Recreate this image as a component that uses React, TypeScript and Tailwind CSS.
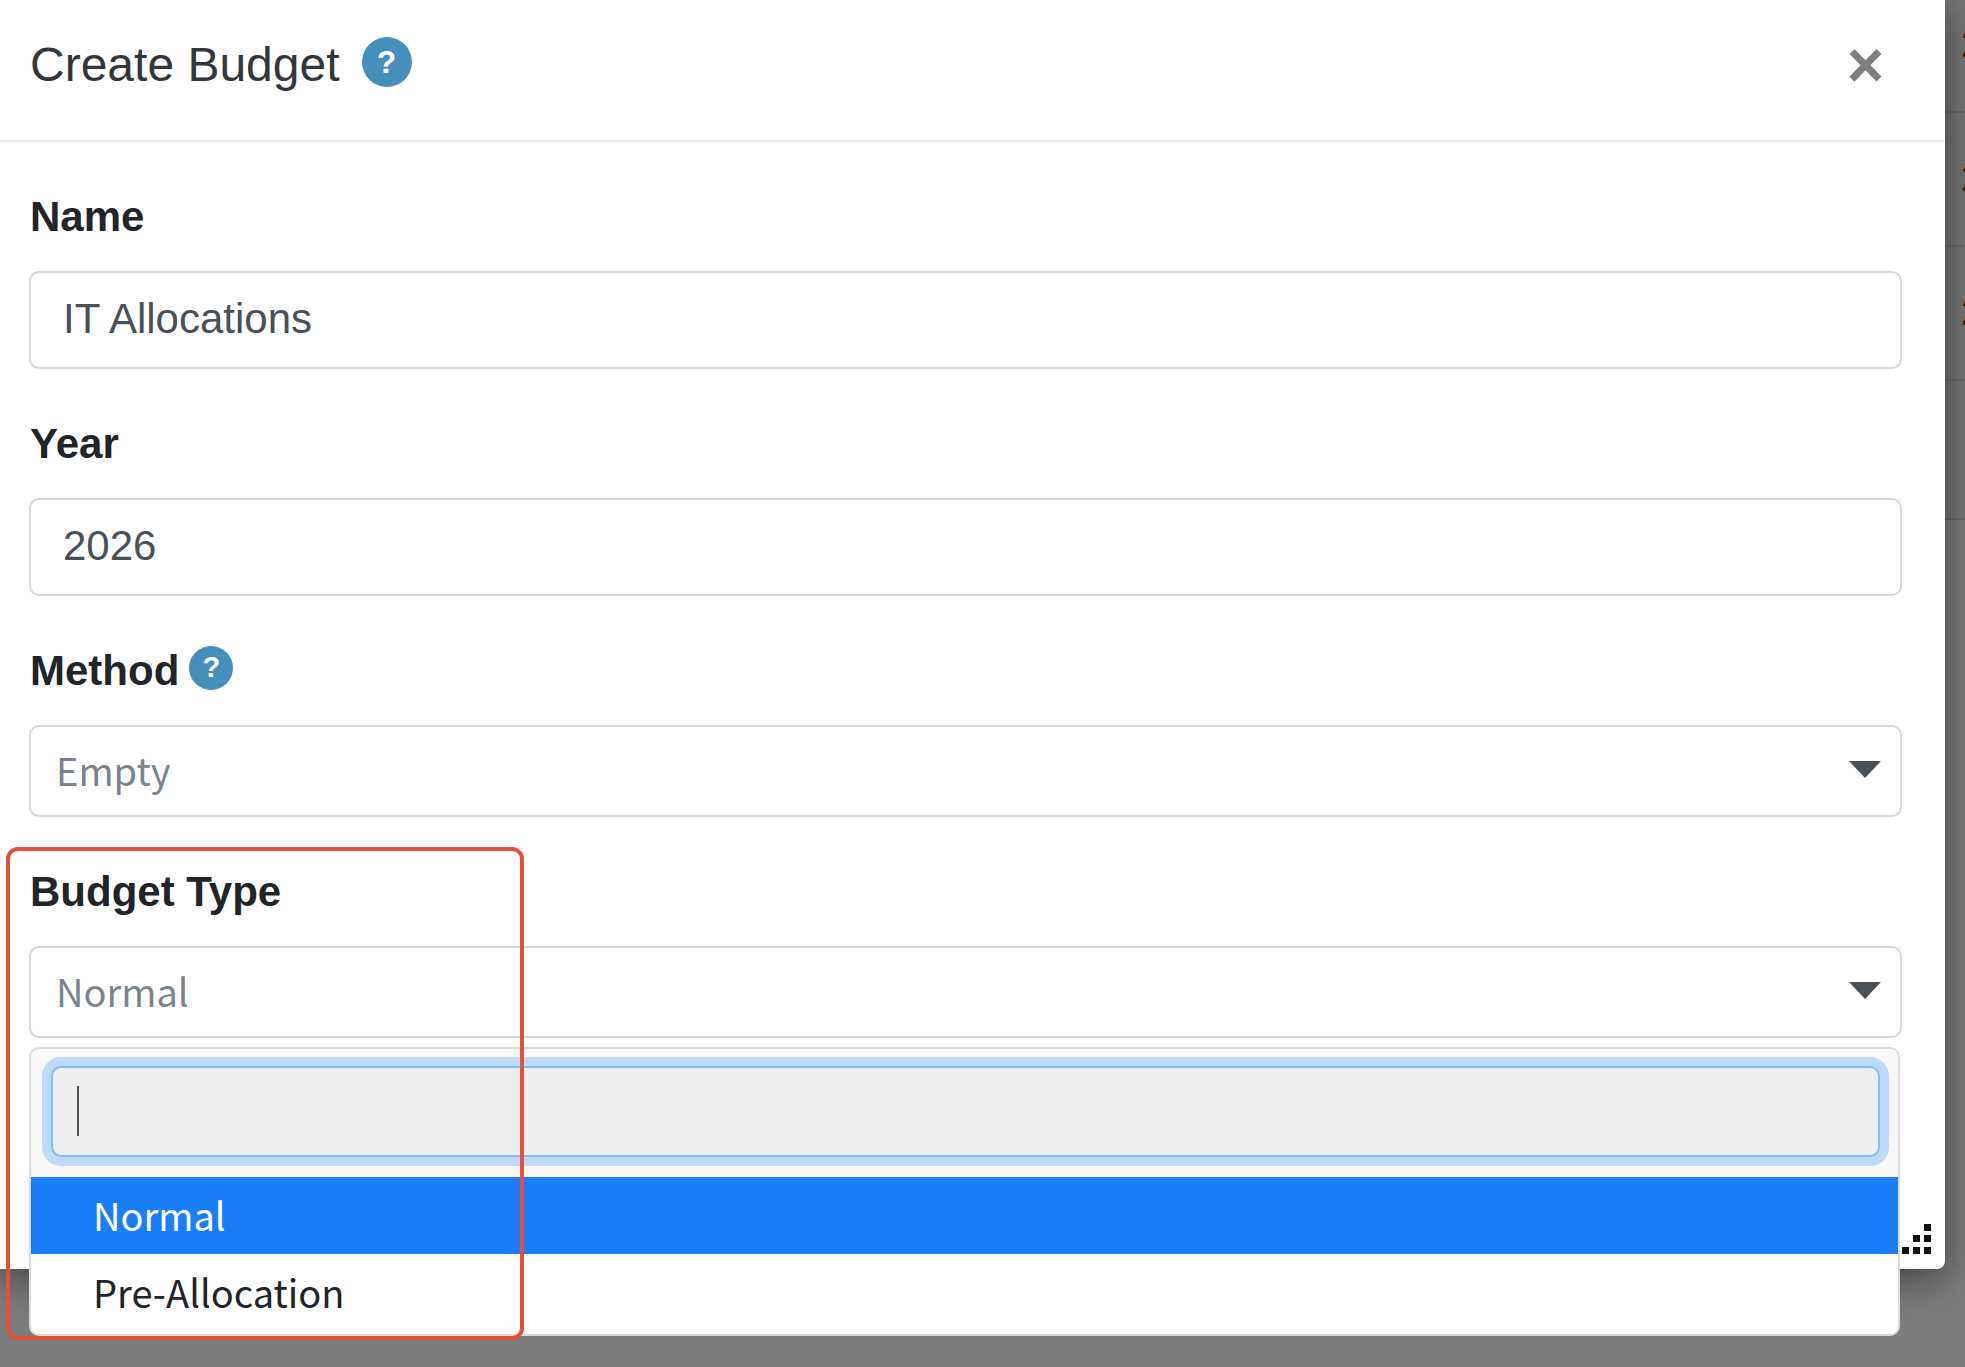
import { useState } from 'react'
import type { ReactNode } from 'react'

const budgetTypes = ['Normal', 'Pre-Allocation']

function HelpButton({ label, className }: { label: string; className: string }) {
  return (
    <button
      type="button"
      aria-label={label}
      className={`flex shrink-0 items-center justify-center rounded-full bg-[#458fbd] font-bold text-white ${className}`}
    >
      ?
    </button>
  )
}

function FieldLabel({ htmlFor, children }: { htmlFor: string; children: ReactNode }) {
  return (
    <label htmlFor={htmlFor} className="pl-px text-[42px] leading-[64px] font-bold text-[#212529]">
      {children}
    </label>
  )
}

function TextField({ id, label, initial }: { id: string; label: string; initial: string }) {
  const [value, setValue] = useState(initial)

  return (
    <div className="flex flex-col gap-[22px]">
      <FieldLabel htmlFor={id}>{label}</FieldLabel>
      <input
        id={id}
        value={value}
        onChange={(e) => setValue(e.target.value)}
        className="h-[98px] w-full rounded-[10px] border-2 border-[#d5dae0] bg-white px-8 pb-[2px] text-[42px] text-[#495057] outline-none"
      />
    </div>
  )
}

function SelectField({ id, options }: { id: string; options: string[] }) {
  return (
    <div className="relative">
      <select
        id={id}
        className="block h-[92px] w-full appearance-none rounded-[10px] border-2 border-[#d5dae0] bg-white px-[25px] pb-1 font-['Noto_Sans_CJK_SC',sans-serif] text-[38px] text-[#7b848c] outline-none"
      >
        {options.map((option) => (
          <option key={option}>{option}</option>
        ))}
      </select>
      <svg viewBox="0 0 32 17" className="pointer-events-none absolute top-9 right-[21px] h-[17px] w-8" aria-hidden="true">
        <path d="M0 0h32L16 17z" fill="#495057" />
      </svg>
    </div>
  )
}

function Backdrop() {
  return (
    <div className="absolute inset-0 flex flex-col overflow-hidden bg-[#7c7d7f]" aria-hidden="true">
      {[0, 1, 2, 3].map((row) => (
        <div
          key={row}
          className="flex h-[134px] justify-end border-b-2 border-[#6a6c6d] bg-[#777776] first:h-[113px] last:h-[139px]"
        >
          {row < 3 && <span className="mt-auto mb-11 -mr-4 text-[36px] leading-[44px] text-[#4a2008]">2</span>}
        </div>
      ))}
    </div>
  )
}

export default function App() {
  const [search, setSearch] = useState('')

  return (
    <div className="relative min-h-screen overflow-hidden font-['Liberation_Sans',Arial,sans-serif]">
      <Backdrop />

      <div role="dialog" aria-labelledby="title" className="relative mr-5 rounded-br-lg bg-white shadow-[0_10px_40px_rgba(0,0,0,0.5)]">
        <header className="flex h-[142px] items-start justify-between border-b-2 border-[#e9ecef] pt-[29px] pr-[61px] pl-[30px]">
          <div className="flex items-center gap-[22px]">
            <h1 id="title" className="text-[48px] leading-[72px] text-[#33373b]">
              Create Budget
            </h1>
            <HelpButton label="About budgets" className="mb-[6px] size-[50px] text-[32px]" />
          </div>
          <button type="button" aria-label="Close" className="text-[64px] leading-[72px] font-bold text-[#7f7f7f]">
            ×
          </button>
        </header>

        <form className="flex flex-col gap-[43px] pt-[43px] pr-[43px] pb-[231px] pl-[29px]">
          <TextField id="name" label="Name" initial="IT Allocations" />
          <TextField id="year" label="Year" initial="2026" />

          <div className="flex flex-col gap-[22px]">
            <div className="flex items-center gap-[10px]">
              <FieldLabel htmlFor="method">Method</FieldLabel>
              <HelpButton label="About methods" className="mb-[6px] size-11 text-[29px]" />
            </div>
            <SelectField id="method" options={['Empty']} />
          </div>

          <div className="relative flex flex-col gap-[22px]">
            <FieldLabel htmlFor="type">Budget Type</FieldLabel>
            <SelectField id="type" options={budgetTypes} />

            <div className="absolute top-full right-[2px] left-0 mt-[9px] overflow-hidden rounded-[10px] border-2 border-[#dcdcdc] bg-white font-['Noto_Sans_CJK_SC',sans-serif] text-[38px]">
              <div className="bg-[#f7f7f7] pt-[17px] pr-[18px] pb-5 pl-5">
                <div className="relative">
                  <input
                    aria-label="Search budget types"
                    value={search}
                    onChange={(e) => setSearch(e.target.value)}
                    className="block h-[91px] w-full rounded-[10px] border-2 border-[#80bdff] bg-[#eeeeee] px-6 text-[#495057] ring-9 ring-[#c0d9f9] outline-none"
                  />
                  <span className="pointer-events-none absolute top-5 left-[26px] h-[50px] w-[2px] bg-[#495057]" />
                </div>
              </div>
              <ul role="listbox" aria-label="Budget types" className="pb-[3px]">
                {budgetTypes.map((type) => (
                  <li
                    key={type}
                    role="option"
                    aria-selected={type === 'Normal'}
                    className="h-[77px] px-[62px] leading-[75px] text-[#212529] aria-selected:bg-[#1a7efb] aria-selected:text-white"
                  >
                    {type}
                  </li>
                ))}
              </ul>
            </div>

            {/* highlight around the budget type field */}
            <div className="pointer-events-none absolute -top-[13px] -left-[23px] h-[493px] w-[518px] rounded-xl border-4 border-[#e54f3c]" />
          </div>
        </form>

        {/* resize grip */}
        <svg viewBox="0 0 30 30" className="absolute right-[14px] bottom-[15px] size-[30px]" aria-hidden="true">
          <path d="M23 0h7v7h-7zM12 11h7v7h-7zM23 11h7v7h-7zM1 23h7v7H1zM12 23h7v7h-7zM23 23h7v7h-7z" fill="#111" />
        </svg>
      </div>
    </div>
  )
}
